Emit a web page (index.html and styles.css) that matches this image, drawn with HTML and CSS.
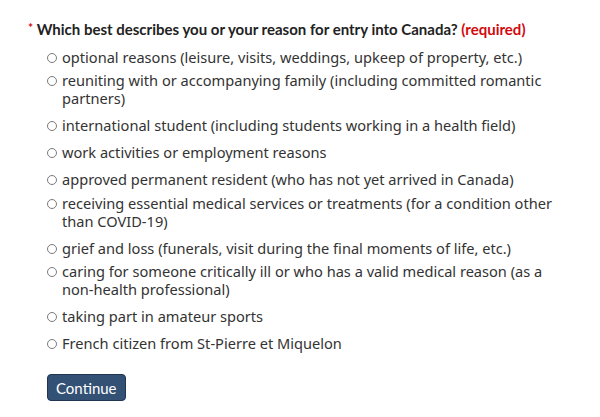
FILE: index.html
```html
<!DOCTYPE html>
<html lang="en">
<head>
<meta charset="utf-8">
<title>Reason for entry</title>
<link rel="stylesheet" href="styles.css">
</head>
<body>
<form class="form">
  <fieldset class="group">
    <legend class="question"><span class="star">*</span> Which best describes you or your reason for entry into Canada? <span class="req">(required)</span></legend>
    <ul class="options">
      <li class="option tight"><span class="radio"></span><span class="label">optional reasons (leisure, visits, weddings, upkeep of property, etc.)</span></li>
      <li class="option"><span class="radio"></span><span class="label">reuniting with or accompanying family (including committed romantic partners)</span></li>
      <li class="option"><span class="radio"></span><span class="label">international student (including students working in a health field)</span></li>
      <li class="option"><span class="radio"></span><span class="label">work activities or employment reasons</span></li>
      <li class="option mid"><span class="radio"></span><span class="label">approved permanent resident (who has not yet arrived in Canada)</span></li>
      <li class="option"><span class="radio"></span><span class="label">receiving essential medical services or treatments (for a condition other than COVID-19)</span></li>
      <li class="option mid2"><span class="radio"></span><span class="label">grief and loss (funerals, visit during the final moments of life, etc.)</span></li>
      <li class="option"><span class="radio"></span><span class="label">caring for someone critically ill or who has a valid medical reason (as a non-health professional)</span></li>
      <li class="option"><span class="radio"></span><span class="label">taking part in amateur sports</span></li>
      <li class="option"><span class="radio"></span><span class="label">French citizen from St-Pierre et Miquelon</span></li>
    </ul>
  </fieldset>
  <button type="button" class="btn">Continue</button>
</form>
</body>
</html>
```
FILE: styles.css
```css
html, body {
  margin: 0;
  padding: 0;
  background: #ffffff;
}
body {
  font-family: "Noto Sans", sans-serif;
  color: #333333;
}
.form {
  padding: 18px 0 0 28px;
}
.group {
  border: 0;
  margin: 0;
  padding: 0;
}
.question {
  padding: 0;
  font-family: Lato, sans-serif;
  font-weight: 700;
  font-size: 15px;
  line-height: 20px;
  color: #222222;
}
.star {
  color: #d3080c;
  font-size: 12px;
  vertical-align: 3px;
}
.req {
  color: #d3080c;
}
.options {
  list-style: none;
  margin: 9px 0 0 0;
  padding: 0 0 0 19px;
  width: 512px;
}
.option {
  display: flex;
  gap: 5px;
  font-size: 14.6px;
  line-height: 18px;
  margin-bottom: 9px;
}
.option.tight {
  margin-bottom: 5px;
}
.option.mid {
  margin-bottom: 6px;
}
.option.mid2 {
  margin-bottom: 5px;
}
.radio {
  flex: none;
  width: 8px;
  height: 8px;
  margin-top: 5px;
  border: 1px solid #7a7a7a;
  border-radius: 50%;
}
.btn {
  margin: 13px 0 0 19px;
  padding: 0 8px;
  height: 27px;
  background: #335075;
  border: 1px solid #1f3552;
  border-radius: 4px;
  color: #ffffff;
  font-family: Lato, sans-serif;
  font-size: 15px;
}
```
